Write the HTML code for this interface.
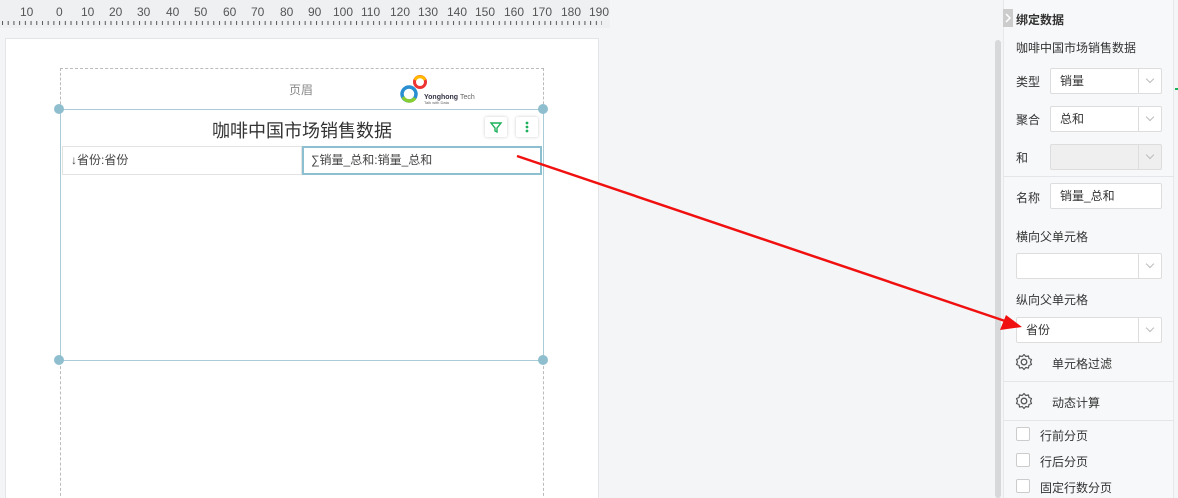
<!DOCTYPE html>
<html><head><meta charset="utf-8"><style>
*{margin:0;padding:0;box-sizing:border-box}
html,body{width:1178px;height:498px;overflow:hidden}
body{background:#f4f5f7;font-family:"Liberation Sans","Noto Sans CJK SC",sans-serif;position:relative;color:#333}
.abs{position:absolute}
.lbl{font-size:12px;color:#333}
.sel{position:absolute;left:1050px;width:112px;height:26px;border:1px solid #ddd;background:#fff;border-radius:2px;font-size:12px;line-height:24px;padding-left:9px}
.sel:after{content:"";position:absolute;right:0;top:0;width:22px;height:24px;border-left:1px solid #ddd}
.sel i{position:absolute;right:8px;top:7px;width:6px;height:6px;border-right:1px solid #bbb;border-bottom:1px solid #bbb;transform:rotate(45deg);z-index:1}
.sel.n:after{display:none}
.cb{position:absolute;left:1016px;width:14px;height:14px;border:1px solid #ccc;background:#fff;border-radius:2px}
</style></head><body>
<svg class="abs" style="left:0;top:0" width="1000" height="30">
<rect x="0" y="0" width="1000" height="30" fill="#f4f5f7"/>
<rect x="0" y="0" width="610" height="28" fill="#eef0f2"/>
<defs><pattern id="t" x="2" y="0" width="5.71" height="30" patternUnits="userSpaceOnUse"><line x1="0.5" y1="21" x2="0.5" y2="25" stroke="#555" stroke-width="1"/></pattern></defs>
<rect x="2" y="0" width="600" height="30" fill="url(#t)"/>
<g font-size="12" fill="#555" font-family="Liberation Sans">
<text x="20" y="16">10</text><text x="56" y="16">0</text><text x="81" y="16">10</text><text x="109" y="16">20</text><text x="137" y="16">30</text><text x="166" y="16">40</text><text x="194" y="16">50</text><text x="223" y="16">60</text><text x="251" y="16">70</text><text x="280" y="16">80</text><text x="308" y="16">90</text><text x="333" y="16">100</text><text x="361" y="16">110</text><text x="390" y="16">120</text><text x="418" y="16">130</text><text x="447" y="16">140</text><text x="475" y="16">150</text><text x="504" y="16">160</text><text x="532" y="16">170</text><text x="561" y="16">180</text><text x="589" y="16">190</text></g>
</svg>
<div class="abs" style="left:5px;top:38px;width:594px;height:465px;background:#fff;border:1px solid #e3e5e8"></div>
<div class="abs" style="left:60px;top:68px;width:484px;height:41px;border:1px dashed #bbb;border-bottom:none"></div>
<div class="abs" style="left:289px;top:81px;font-size:12px;color:#888">页眉</div>
<svg class="abs" style="left:398px;top:73px" width="80" height="34">
<circle cx="22" cy="9" r="5.5" fill="none" stroke="#e33" stroke-width="3"/>
<path d="M17 7 A5.5 5.5 0 0 1 27 7" stroke="#fb0" stroke-width="3" fill="none"/>
<circle cx="11" cy="21" r="7" fill="none" stroke="#2a8fd0" stroke-width="3.5"/>
<path d="M5 24 A7 7 0 0 0 17 25" stroke="#8c3" stroke-width="3.5" fill="none"/>
<text x="26" y="26" font-size="7" fill="#334" font-weight="bold">Yonghong <tspan font-weight="normal" fill="#666">Tech</tspan></text>
<text x="26" y="31" font-size="4" fill="#666">Talk with Data</text></svg>
<div class="abs" style="left:60px;top:109px;width:484px;height:252px;border:1px solid #a9ccd6"></div>
<div class="abs" style="left:60px;top:361px;width:484px;height:140px;border:1px dashed #bbb;border-top:none"></div>
<div class="abs" style="left:54px;top:104px;width:10px;height:10px;border-radius:50%;background:#8fbfcf"></div>
<div class="abs" style="left:538px;top:104px;width:10px;height:10px;border-radius:50%;background:#8fbfcf"></div>
<div class="abs" style="left:54px;top:355px;width:10px;height:10px;border-radius:50%;background:#8fbfcf"></div>
<div class="abs" style="left:538px;top:355px;width:10px;height:10px;border-radius:50%;background:#8fbfcf"></div>
<div class="abs" style="left:60px;top:117px;width:484px;text-align:center;font-size:18px;color:#333">咖啡中国市场销售数据</div>
<div class="abs" style="left:485px;top:117px;width:22px;height:20px;background:#fff;box-shadow:0 0 3px #ccc;border-radius:2px"><svg width="22" height="20"><path d="M6 6h10l-4 5v4l-2-1v-3z" fill="none" stroke="#1cb05a" stroke-width="1.4"/></svg></div>
<div class="abs" style="left:516px;top:117px;width:22px;height:20px;background:#fff;box-shadow:0 0 3px #ccc;border-radius:2px"><svg width="22" height="20"><circle cx="11" cy="6" r="1.4" fill="#1cb05a"/><circle cx="11" cy="10" r="1.4" fill="#1cb05a"/><circle cx="11" cy="14" r="1.4" fill="#1cb05a"/></svg></div>
<div class="abs" style="left:62px;top:146px;width:240px;height:29px;border:1px solid #e3e3e3;font-size:12px;line-height:27px;padding-left:8px;color:#444">↓省份:省份</div>
<div class="abs" style="left:302px;top:146px;width:240px;height:29px;border:2px solid #8cc0d0;font-size:12px;line-height:25px;padding-left:7px;color:#444">∑销量_总和:销量_总和</div>
<div class="abs" style="left:995px;top:40px;width:6px;height:458px;background:#d7d8da;border-radius:3px"></div>
<div class="abs" style="left:1003px;top:0;width:171px;height:498px;background:#f7f8fa;border-left:1px solid #e6e8ea;border-right:1px solid #e6e8ea"></div>
<svg class="abs" style="left:1003px;top:9px" width="10" height="18"><rect width="10" height="18" fill="#ccc"/><path d="M3 5l4 4-4 4" stroke="#fff" stroke-width="1.5" fill="none"/></svg>
<div class="abs lbl" style="left:1016px;top:11px;font-weight:bold">绑定数据</div>
<div class="abs lbl" style="left:1016px;top:39px">咖啡中国市场销售数据</div>
<div class="abs lbl" style="left:1016px;top:73px">类型</div>
<div class="sel" style="top:68px">销量<i></i></div>
<div class="abs lbl" style="left:1016px;top:111px">聚合</div>
<div class="sel" style="top:106px">总和<i></i></div>
<div class="abs lbl" style="left:1016px;top:149px">和</div>
<div class="sel" style="top:144px;background:#efefef"><i></i></div>
<div class="abs" style="left:1004px;top:176px;width:170px;height:1px;background:#e3e5e8"></div>
<div class="abs lbl" style="left:1016px;top:189px">名称</div>
<div class="sel n" style="top:183px">销量_总和</div>
<div class="abs lbl" style="left:1016px;top:228px">横向父单元格</div>
<div class="sel" style="top:253px;left:1016px;width:146px"><i></i></div>
<div class="abs lbl" style="left:1016px;top:291px">纵向父单元格</div>
<div class="sel" style="top:317px;left:1016px;width:146px">省份<i></i></div>
<svg class="abs" style="left:1015px;top:353px" width="18" height="18"><circle cx="9" cy="9" r="2.8" fill="none" stroke="#555" stroke-width="1.3"/><path d="M9 1.5l1.8 2 2.6-.6.6 2.6 2.5 1-1 2.5 1 2.5-2.5 1-.6 2.6-2.6-.6L9 16.5l-1.8-2-2.6.6-.6-2.6-2.5-1 1-2.5-1-2.5 2.5-1 .6-2.6 2.6.6z" fill="none" stroke="#555" stroke-width="1.2" stroke-linejoin="round"/></svg>
<div class="abs lbl" style="left:1052px;top:355px">单元格过滤</div>
<div class="abs" style="left:1004px;top:381px;width:170px;height:1px;background:#e3e5e8"></div>
<svg class="abs" style="left:1015px;top:392px" width="18" height="18"><circle cx="9" cy="9" r="2.8" fill="none" stroke="#555" stroke-width="1.3"/><path d="M9 1.5l1.8 2 2.6-.6.6 2.6 2.5 1-1 2.5 1 2.5-2.5 1-.6 2.6-2.6-.6L9 16.5l-1.8-2-2.6.6-.6-2.6-2.5-1 1-2.5-1-2.5 2.5-1 .6-2.6 2.6.6z" fill="none" stroke="#555" stroke-width="1.2" stroke-linejoin="round"/></svg>
<div class="abs lbl" style="left:1052px;top:394px">动态计算</div>
<div class="abs" style="left:1004px;top:420px;width:170px;height:1px;background:#e3e5e8"></div>
<div class="cb" style="top:427px"></div><div class="abs lbl" style="left:1040px;top:427px">行前分页</div>
<div class="cb" style="top:453px"></div><div class="abs lbl" style="left:1040px;top:453px">行后分页</div>
<div class="cb" style="top:479px"></div><div class="abs lbl" style="left:1040px;top:479px">固定行数分页</div>
<div class="abs" style="left:1175px;top:88px;width:3px;height:2px;background:#1cb05a"></div>
<svg class="abs" style="left:0;top:0" width="1178" height="498"><line x1="517" y1="156" x2="1008" y2="322" stroke="#f01010" stroke-width="2.5"/><polygon points="1022,327 1000,330 1006,315" fill="#f01010"/></svg>
</body></html>
